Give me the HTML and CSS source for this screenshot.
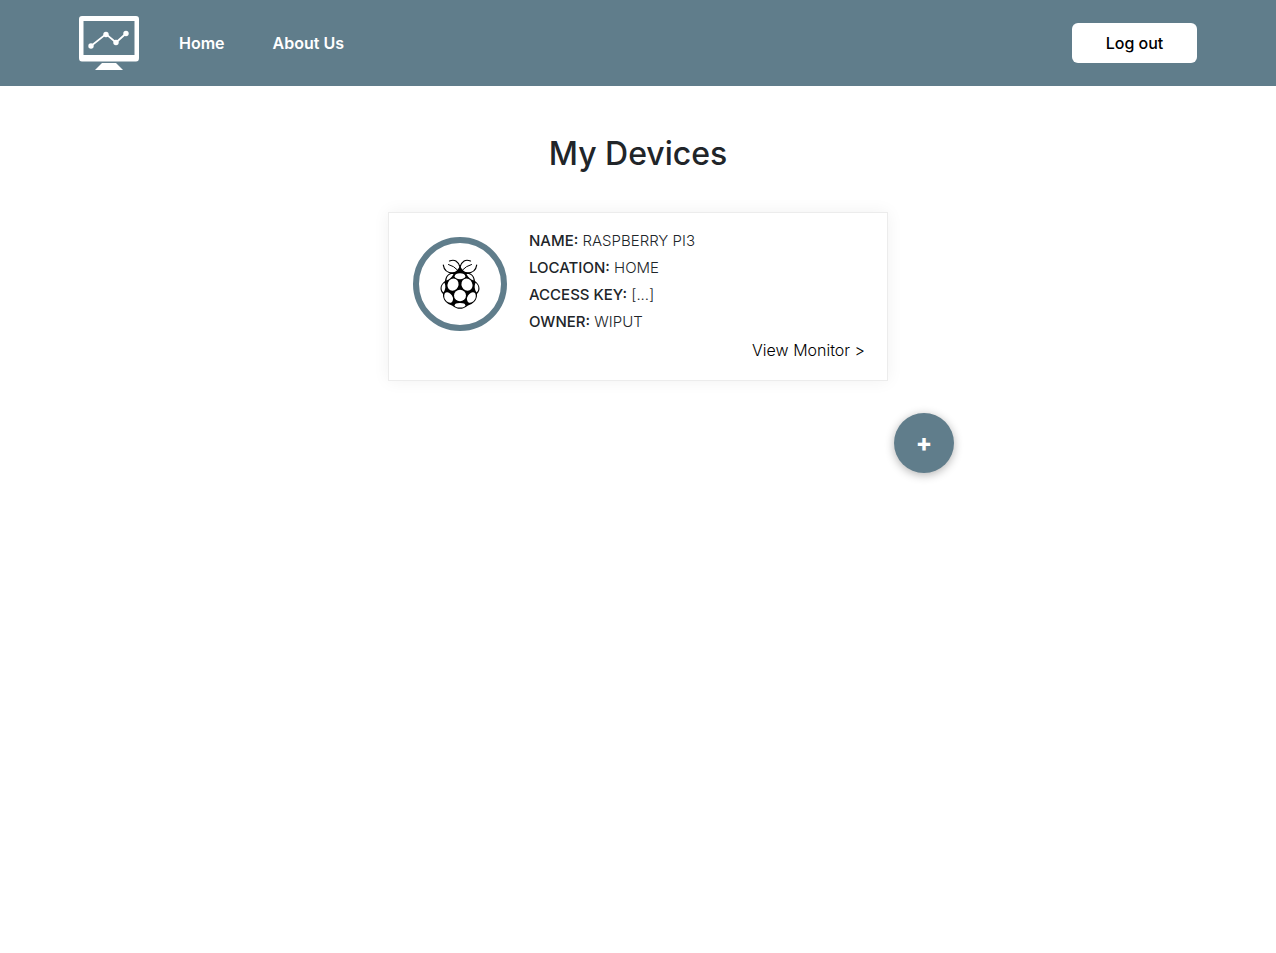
FILE: index.html
```html
<!DOCTYPE html>
<html lang="en">
<head>
<meta charset="utf-8">
<meta name="viewport" content="width=device-width, initial-scale=1">
<title>My Devices</title>
<link rel="stylesheet" href="styles.css">
</head>
<body>
<header class="navbar">
  <nav class="nav-links">
    <a class="brand" href="#" aria-label="Dashboard">
      <svg class="logo" viewBox="0 0 60 56" aria-hidden="true">
        <path fill="#fff" fill-rule="evenodd" d="M3 1H57Q60 1 60 4V43Q60 46.500 57 46.500H3Q0 46.500 0 43V4Q0 1 3 1ZM4.500 6V40H55.500V6Z"/>
        <path fill="#fff" d="M23 48H37L44 55H16Z"/>
        <path fill="none" stroke="#fff" stroke-width="1.700" d="M12 31L27 19L37 27.500L47 18.500"/>
        <g fill="#fff"><circle cx="12" cy="31" r="2.700"/><circle cx="27" cy="19.500" r="2.700"/><circle cx="37" cy="27.500" r="2.700"/><circle cx="47" cy="18.500" r="2.700"/></g>
      </svg>
    </a>
    <a class="nav-link" href="#">Home</a>
    <a class="nav-link" href="#">About Us</a>
  </nav>
  <button class="logout" type="button">Log out</button>
</header>
<main class="content">
  <h1 class="title">My Devices</h1>
  <article class="card">
    <div class="avatar">
      <svg class="berry" viewBox="0 0 40 50" aria-hidden="true">
        <g fill="none" stroke="#000" stroke-width="1.200" stroke-linecap="round">
          <path d="M9.500 2Q17-1 20 8Q23-1 30.500 2"/>
          <path d="M3.300 6C4 11 7 14 13 14Q18 13 20 8Q22 13 27 14C33 14 36 11 36.700 6"/>
          <path stroke-width="1" d="M8.500 5.500Q14 7 17.500 11M31.500 5.500Q26 7 22.500 11"/>
        </g>
        <path d="M20 8L24 13C30 13 34.500 16 35 22C38 24 39.700 27 39.500 30C39.300 32 38 34 37 35C37.500 41 33 45 28 46.500C25 49 22.500 49.800 20 49.800S15 49 12 46.500C7 45 2.500 41 3 35C2 34 .7 32 .5 30C.3 27 2 24 5 22C5.500 16 10 13 16 13Z"/>
        <g fill="#fff">
          <path d="M6.500 21.500C6.500 17 9.500 14.500 13.500 15C12 18 9.500 20.500 6.500 21.500Z"/>
          <path d="M33.500 21.500C33.500 17 30.500 14.500 26.500 15C28 18 30.500 20.500 33.500 21.500Z"/>
          <path d="M4.500 23.800C6 27 5.500 31 3.500 33.500C.8 31.500 .8 26 4.500 23.800Z"/>
          <path d="M35.500 23.800C34 27 34.500 31 36.500 33.500C39.200 31.500 39.200 26 35.500 23.800Z"/>
          <ellipse cx="8.600" cy="38.500" rx="3.900" ry="5.700" transform="rotate(-30 8.600 38.500)"/>
          <ellipse cx="31.400" cy="38.500" rx="3.900" ry="5.700" transform="rotate(30 31.400 38.500)"/>
          <ellipse cx="20" cy="46.200" rx="5.300" ry="2.300"/>
          <ellipse cx="20" cy="17.200" rx="5.300" ry="3"/>
          <ellipse cx="13" cy="25.700" rx="5.400" ry="6.200" transform="rotate(25 13 25.700)"/>
          <ellipse cx="27" cy="25.700" rx="5.400" ry="6.200" transform="rotate(-25 27 25.700)"/>
          <ellipse cx="20" cy="36.500" rx="6" ry="5.800"/>
        </g>
      </svg>
    </div>
    <div class="details">
      <dl class="fields">
        <div class="field"><dt>NAME:</dt> <dd>RASPBERRY PI3</dd></div>
        <div class="field"><dt>LOCATION:</dt> <dd>HOME</dd></div>
        <div class="field"><dt>ACCESS KEY:</dt> <dd>[...]</dd></div>
        <div class="field"><dt>OWNER:</dt> <dd>WIPUT</dd></div>
      </dl>
      <a class="monitor" href="#">View Monitor &gt;</a>
    </div>
  </article>
  <button class="add" type="button" aria-label="Add device"><span aria-hidden="true">+</span></button>
</main>
</body>
</html>
```
FILE: styles.css
```css
* { box-sizing: border-box; }
body {
  margin: 0;
  background: #fff;
  color: #212529;
  font-family: Inter, "Noto Sans", sans-serif;
  font-size: 16px;
  line-height: 24px;
}
a { color: inherit; text-decoration: none; }
button { border: 0; font: inherit; cursor: pointer; }
.navbar {
  display: flex;
  align-items: center;
  justify-content: space-between;
  min-height: 86px;
  padding: 0 79px;
  background: #607d8b;
}
.nav-links { display: flex; align-items: center; gap: 48px; }
.brand { display: flex; margin-right: -8px; }
.logo { width: 60px; height: 56px; }
.nav-link { color: #fff; font-weight: 600; }
.logout {
  min-width: 125px;
  padding: 8px 24px;
  border-radius: 6px;
  background: #fff;
  color: #000;
  font-weight: 500;
}
.content {
  display: flex;
  flex-direction: column;
  align-items: center;
  padding: 48px 16px;
}
.title {
  margin: 0 0 38px;
  font-size: 32px;
  font-weight: 500;
  line-height: 40px;
}
.card {
  display: flex;
  gap: 22px;
  width: 100%;
  max-width: 500px;
  padding: 14px 22px 15px 24px;
  border: 1px solid #ececec;
  box-shadow: 0 0 16px rgba(0, 0, 0, 0.06);
}
.avatar {
  display: flex;
  flex: none;
  align-items: center;
  justify-content: center;
  width: 94px;
  height: 94px;
  margin-top: 10px;
  border: 6px solid #607d8b;
  border-radius: 50%;
}
.berry { width: 40px; height: 50px; }
.details { display: flex; flex: 1; flex-direction: column; }
.fields { margin: 0; font-size: 15px; line-height: 27px; }
.field dt { display: inline; font-weight: 500; }
.field dd { display: inline; margin: 0; font-weight: 300; }
.monitor { align-self: flex-end; color: #000; font-weight: 300; line-height: 30px; }
.add {
  width: 60px;
  height: 60px;
  margin: 32px 0 0 572px;
  padding: 0;
  border-radius: 50%;
  background: #607d8b;
  box-shadow: 0 2px 10px rgba(0, 0, 0, 0.3);
  color: #fff;
  font-size: 24px;
  font-weight: 800;
}
```
